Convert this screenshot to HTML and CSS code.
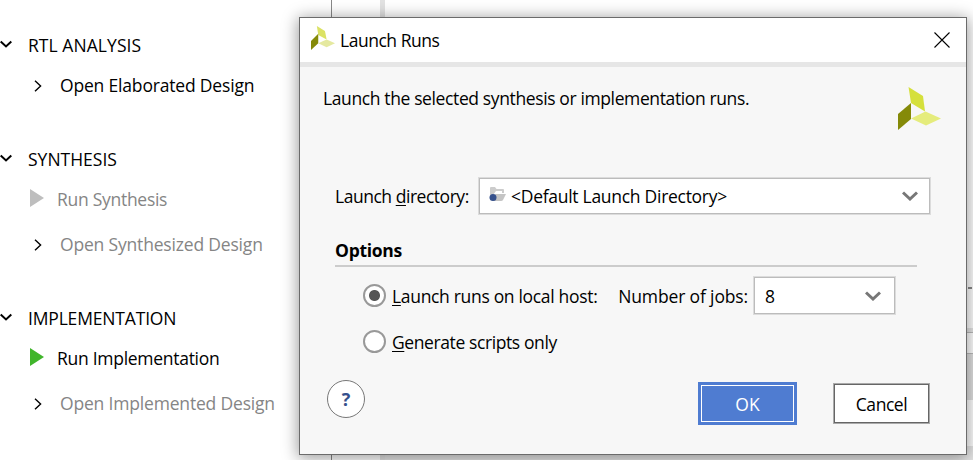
FILE: index.html
```html
<!DOCTYPE html>
<html lang="en">
<head>
<meta charset="utf-8">
<title>Launch Runs</title>
<link rel="stylesheet" href="styles.css">
</head>
<body>
<div class="app">
  <nav class="flow">
    <section class="group">
      <h2 class="head"><svg class="down" viewBox="0 0 12 8"><path d="M.7 1.5 6 6.5 11.3 1.5"/></svg><span class="w-rtl">RTL ANALYSIS</span></h2>
      <div class="item"><svg class="right" viewBox="0 0 8 12"><path d="M1 .7 6.6 6 1 11.3"/></svg><span class="w-elab">Open Elaborated Design</span></div>
    </section>
    <section class="group">
      <h2 class="head"><svg class="down" viewBox="0 0 12 8"><path d="M.7 1.5 6 6.5 11.3 1.5"/></svg><span class="w-syn">SYNTHESIS</span></h2>
      <div class="item run off"><svg class="play" viewBox="0 0 14 18"><path d="M0 0 14 9 0 18Z"/></svg><span class="w-rsyn">Run Synthesis</span></div>
      <div class="item off"><svg class="right" viewBox="0 0 8 12"><path d="M1 .7 6.6 6 1 11.3"/></svg><span class="w-osyn">Open Synthesized Design</span></div>
    </section>
    <section class="group">
      <h2 class="head"><svg class="down" viewBox="0 0 12 8"><path d="M.7 1.5 6 6.5 11.3 1.5"/></svg><span class="w-imp">IMPLEMENTATION</span></h2>
      <div class="item run"><svg class="play" viewBox="0 0 14 18"><path d="M0 0 14 9 0 18Z"/></svg><span class="w-rimp">Run Implementation</span></div>
      <div class="item off"><svg class="right" viewBox="0 0 8 12"><path d="M1 .7 6.6 6 1 11.3"/></svg><span class="w-oimp">Open Implemented Design</span></div>
    </section>
  </nav>
  <div class="splitter"></div>
  <main class="workspace">
    <div class="pane-top"><i class="dash"></i></div>
    <div class="pane-bar"></div>
    <div class="pane-tabs"></div>
    <div class="pane-head"></div>
    <div class="pane-row"></div>
    <div class="pane-foot"></div>
  </main>

  <div class="dialog" role="dialog">
    <header class="titlebar">
      <svg class="logo-s" viewBox="0 0 43 43"><path fill="#dbe265" d="M10.500 0 25 9 28 24 13 16Z"/><path fill="#858a08" d="M0 27 13 14V31L0 43Z"/><path fill="#e5e9a0" d="M13 31 28 24 43 31 28 38Z"/></svg>
      <span class="w-title">Launch Runs</span>
      <svg class="close" viewBox="0 0 16 16"><path d="M.5.5l15 15M15.500.5l-15 15"/></svg>
    </header>
    <div class="content">
      <div class="intro"><span class="w-intro">Launch the selected synthesis or implementation runs.</span>
        <svg class="logo" viewBox="0 0 43 43"><path fill="#d5e03c" d="M10.500 0 25 9 27 24.500 13 16Z"/><path fill="#858a08" d="M0 27 13 16V32L0 43Z"/><path fill="#e5ec7c" d="M13 31.500 27.500 24.500 43 31.500 28 38.500Z"/></svg>
      </div>
      <div class="dir">
        <label class="w-dir">Launch <u>d</u>irectory:</label>
        <div class="select wide">
          <svg class="folder" viewBox="0 0 17 15"><path fill="#ccc" d="M1 1q0-1 1-1h4l1.500 2H14q1 0 1 1v3h-2V4H7L4 8H1Z"/><path fill="#c4c4c4" d="M6 7h11l-3 6q-.5 1-2 1H3Z"/><circle cx="4" cy="10.500" r="3.500" fill="#35508c"/></svg>
          <span class="w-def">&lt;Default Launch Directory&gt;</span>
          <svg class="chev" viewBox="0 0 16 10"><path d="M1 1.500 8 8 15 1.500"/></svg>
        </div>
      </div>
      <h3 class="options"><span class="w-opt">Options</span></h3>
      <div class="choice">
        <i class="radio on"></i><span class="w-local"><u>L</u>aunch runs on local host:</span>
        <label class="jobs w-jobs">Number of jobs:</label>
        <div class="select small"><span>8</span><svg class="chev" viewBox="0 0 16 10"><path d="M1 1.500 8 8 15 1.500"/></svg></div>
      </div>
      <div class="choice second"><i class="radio"></i><span class="w-gen"><u>G</u>enerate scripts only</span></div>
      <footer class="actions">
        <button class="help"><span>?</span></button>
        <button class="ok"><span class="w-ok">OK</span></button>
        <button class="cancel"><span class="w-cancel">Cancel</span></button>
      </footer>
    </div>
  </div>
</div>
</body>
</html>
```
FILE: styles.css
```css
* { box-sizing: border-box; }
body { margin: 0; overflow: hidden; background: #fff; color: #000; font: 17.5px/24px "Open Sans", "Noto Sans", sans-serif; }
svg { display: block; flex: none; }
span, label { white-space: nowrap; flex: none; }
u { text-underline-offset: 2px; text-decoration-thickness: 1px; text-decoration-skip-ink: none; }
.app { position: relative; display: flex; width: 973px; height: 460px; overflow: hidden; }

/* Tracking per label */
.w-rtl { letter-spacing: .06px; }
.w-elab, .w-osyn, .w-oimp { letter-spacing: -.18px; }
.w-rsyn, .w-rimp { letter-spacing: -.28px; }
.w-imp { letter-spacing: -.17px; }
.w-title { letter-spacing: -.47px; }
.w-intro { letter-spacing: -.38px; }
.w-dir { letter-spacing: -.47px; }
.w-def { letter-spacing: -.28px; }
.w-opt { letter-spacing: -.3px; }
.w-local { letter-spacing: -.32px; }
.w-jobs { letter-spacing: -.14px; }
.w-gen { letter-spacing: -.4px; }
.w-cancel { letter-spacing: -.45px; }

.flow { width: 332px; padding-top: 33px; border-right: 1px solid #888; }
.group { height: 114px; }
.group + .group { height: 159px; }
.head { display: flex; align-items: center; gap: 16px; height: 24px; margin: 0 0 16px; font: inherit; }
.item { display: flex; align-items: center; gap: 18px; height: 24px; padding-left: 34px; }
.run { gap: 13px; padding-left: 30px; margin-bottom: 21px; }
.off span { color: #858585; }
.down { width: 12px; height: 8px; margin-top: -3px; fill: none; stroke: #000; stroke-width: 2; }
.right { width: 8px; height: 12px; margin-top: 1px; fill: none; stroke: #000; stroke-width: 1.4; }
.play { width: 14px; height: 18px; margin-top: -3px; fill: #40b52b; }
.off .play { fill: #bebebe; }

.splitter { width: 53px; border-right: 5px solid #e2e2e2; }
.workspace { flex: 1; display: flex; flex-direction: column; }
.pane-top { height: 328px; }
.dash { display: block; width: 4px; height: 2px; margin: 287px 0 0 583px; background: #888; }
.pane-bar { height: 5px; background: #e6e6e6; border-bottom: 1px solid #bbb; }
.pane-tabs { height: 21px; border-bottom: 1px solid #bbb; }
.pane-head { height: 46px; background: #e0e0e0; }
.pane-row { height: 46px; }
.pane-foot { flex: 1; background: #e6e6e6; }

.dialog { position: absolute; left: 299px; top: 17px; width: 668px; height: 438px; border: 1px solid #6b6b6b; background: #f7f7f7; box-shadow: 0 2px 15px 1px rgba(0,0,0,.4); }
.titlebar { display: flex; align-items: center; height: 49px; padding: 0 16px 0 11px; background: #fff; border-bottom: 5px solid #e6e6e6; }
.logo-s { width: 24px; height: 24px; margin: -4px 5px 0 0; }
.close { width: 16px; height: 16px; margin: -1px 0 0 auto; fill: none; stroke: #000; stroke-width: 1.1; }
.content { padding: 0 35px; }
.intro { display: flex; justify-content: space-between; height: 110px; margin: 0 -10px 0 -12px; padding-top: 19px; }
.logo { width: 43px; height: 43px; margin-top: 1px; }
.dir { display: flex; align-items: center; height: 38px; }
.select { display: flex; align-items: center; height: 38px; border: 1px solid #dcdcdc; box-shadow: inset 0 0 0 1px #bcbcbc; background: #fff; }
.wide { width: 453px; margin-left: auto; padding: 0 12px 0 10px; }
.folder { width: 17px; height: 15px; margin: -3px 5px 0 0; }
.chev { width: 16px; height: 10px; margin-left: auto; fill: none; stroke: #777; stroke-width: 3; }
.options { height: 52px; margin: 0 14px 0 0; padding-top: 23px; border-bottom: 2px solid #ccc; font: 700 17.5px/24px "Open Sans", sans-serif; }
.choice { display: flex; align-items: center; height: 39px; margin-top: 9px; padding-left: 28px; }
.radio { flex: none; width: 23px; height: 23px; margin: -1px 6px 0 0; border: 2px solid #999; border-radius: 50%; background: #fff; }
.on { background: radial-gradient(circle, #555 5px, #fff 6px); }
.jobs { margin-left: auto; }
.small { width: 143px; height: 39px; margin: 0 35px 0 5px; padding: 0 14px 0 11px; }
.second { margin-top: 7px; }
.actions { display: flex; align-items: center; height: 43px; margin: 21px -8px 0; }
button { display: block; padding: 0; color: #000; font: inherit; background: #fff; }
.help { width: 38px; height: 38px; margin-top: -9px; border: 1px solid #777; border-radius: 50%; color: #35508c; font-size: 18px; font-weight: 700; }
.ok { width: 99px; height: 43px; margin-left: auto; border: 3px solid #4f7cd1; outline: 1px solid #fff; outline-offset: -4px; background: #4f7cd1; color: #fff; }
.cancel { width: 97px; height: 41px; margin: 0 9px 0 36px; border: 1px solid #aaa; box-shadow: inset 0 0 0 1px #666; }
```
